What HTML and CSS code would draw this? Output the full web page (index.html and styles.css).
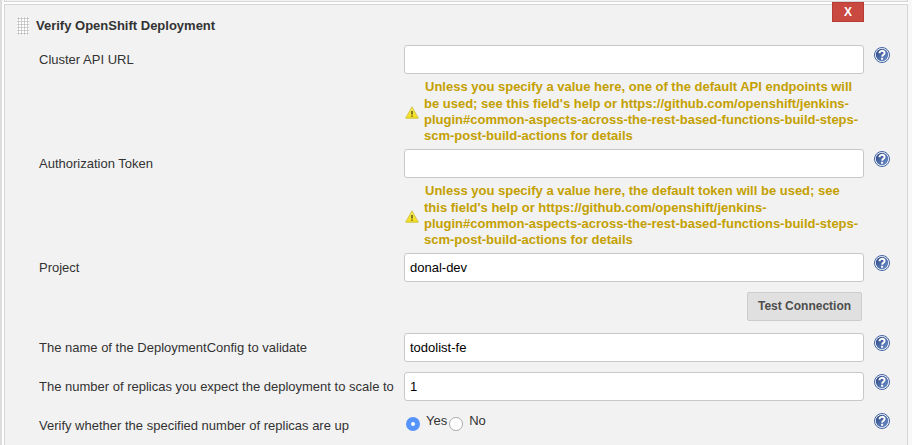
FILE: index.html
```html
<!DOCTYPE html>
<html lang="en">
<head>
<meta charset="utf-8">
<title>Verify OpenShift Deployment</title>
<link rel="stylesheet" href="styles.css">
</head>
<body>
<svg class="defs" width="0" height="0" aria-hidden="true">
  <defs>
    <linearGradient id="blue" x1="0" y1="0" x2="1" y2="1"><stop offset="0" stop-color="#27427f"/><stop offset="1" stop-color="#7395cf"/></linearGradient>
    <linearGradient id="yellow" x1="0" y1="0" x2="0" y2="1"><stop offset="0" stop-color="#f6e95c"/><stop offset="1" stop-color="#f4df12"/></linearGradient>
    <symbol id="help" viewBox="0 0 16 16">
      <circle cx="8" cy="8" r="7.5" fill="#fff" stroke="#4261a5" stroke-width="1"/>
      <circle cx="8" cy="8" r="6.2" fill="url(#blue)"/>
      <path d="M5.5 6.2C5.5 3.2 10.6 3.1 10.6 5.9C10.6 7.7 8.2 7.7 8.1 9.6M8.1 10.8V12.8" fill="none" stroke="#fff" stroke-width="2"/>
    </symbol>
    <symbol id="warn" viewBox="0 0 14 13">
      <path d="M7 .8L13.3 12.2H.7Z" fill="url(#yellow)" stroke="#d2c64a" stroke-width="1" stroke-linejoin="round"/>
      <path d="M7 5V8.6M7 9.4V10.8" stroke="#5b5728" stroke-width="1.5"/>
    </symbol>
  </defs>
</svg>
<div class="previous"></div>
<main class="panel">
  <button class="delete">X</button>
  <header class="title"><span class="grip"></span><b>Verify OpenShift Deployment</b></header>
  <div class="row"><label>Cluster API URL</label><input type="text"><svg class="help"><use href="#help"/></svg></div>
  <div class="warning"><svg><use href="#warn"/></svg><p><span class="w1">Unless you specify a value here, one of the default API endpoints will</span><span class="w2">be used; see this field's help or https://github.com/openshift/jenkins-</span><span class="w3">plugin#common-aspects-across-the-rest-based-functions-build-steps-</span><span class="w4">scm-post-build-actions for details</span></p></div>
  <div class="row"><label>Authorization Token</label><input type="text"><svg class="help"><use href="#help"/></svg></div>
  <div class="warning"><svg><use href="#warn"/></svg><p><span class="w1">Unless you specify a value here, the default token will be used; see</span><span class="w2">this field's help or https://github.com/openshift/jenkins-</span><span class="w3">plugin#common-aspects-across-the-rest-based-functions-build-steps-</span><span class="w4">scm-post-build-actions for details</span></p></div>
  <div class="row"><label>Project</label><input type="text" value="donal-dev"><svg class="help"><use href="#help"/></svg></div>
  <div class="actions"><button class="test">Test Connection</button></div>
  <div class="row"><label>The name of the DeploymentConfig to validate</label><input type="text" value="todolist-fe"><svg class="help"><use href="#help"/></svg></div>
  <div class="row spaced"><label>The number of replicas you expect the deployment to scale to</label><input type="text" value="1"><svg class="help"><use href="#help"/></svg></div>
  <div class="row spaced"><label>Verify whether the specified number of replicas are up</label><div class="radios"><i class="radio on"></i><span class="yes">Yes</span><i class="radio"></i><span>No</span></div><svg class="help"><use href="#help"/></svg></div>
</main>
</body>
</html>
```
FILE: styles.css
```css
* { box-sizing: border-box; }
html { height: 100%; background: #f8f8f8; }
body {
  height: 100%;
  margin: 0;
  padding-left: 2px;
  overflow: hidden;
  border-left: 2px solid #ddd;
  color: #333;
  font: 13px/16px "Liberation Sans", Arial, sans-serif;
}
.defs { position: absolute; }
.previous {
  width: 904px;
  height: 2px;
  border: 1px solid #d5d5d5;
  border-top: 0;
  background: #f2f2f2;
}
.panel {
  position: relative;
  width: 904px;
  height: 460px;
  margin-top: 2px;
  border: 1px solid #d5d5d5;
  background: #f2f2f2;
  box-shadow: 0 -2px #fff, -2px 0 #fff;
}
.delete {
  position: absolute;
  left: 827px;
  top: -3px;
  width: 32px;
  height: 20px;
  padding: 0;
  border: 1px solid #b73b36;
  background: #c9483f;
  color: #fff;
  font: bold 12px/17px "Liberation Sans", Arial, sans-serif;
}
.title { display: flex; height: 40px; padding: 12px 0 0 12px; }
.title b { margin: 1px 0 0 7px; line-height: 16px; }
.grip {
  width: 12px;
  height: 18px;
  background: radial-gradient(circle at 1.5px 1.5px, #bbb 0 0.9px, transparent 1.2px) 0 0 / 3px 3px #fff;
}
.row { display: flex; height: 29px; padding-left: 34px; }
.row label { width: 365px; padding-top: 7px; white-space: nowrap; }
.row input {
  width: 460px;
  height: 29px;
  padding: 0 5px 1px;
  border: 1px solid #c8c8c8;
  border-radius: 3px;
  background: #fff;
  color: #000;
  font: 13px "Liberation Sans", Arial, sans-serif;
}
.help { width: 16px; height: 16px; margin: 2px 0 0 10px; }
.spaced { margin-top: 10px; }
.warning { display: flex; height: 75px; padding: 5px 0 0 400px; }
.warning svg { width: 14px; height: 13px; margin: 27px 5px 0 0; }
.warning p {
  margin: 0;
  color: #c4a000;
  font-size: 13px;
  font-weight: bold;
  white-space: nowrap;
}
.warning span { display: block; width: max-content; height: 16px; line-height: 16px; }
.warning .w1 { height: 17px; margin-left: 1px; }
.actions { display: flex; justify-content: flex-end; height: 51px; padding: 10px 45px 0 0; }
.test {
  width: 115px;
  height: 29px;
  padding: 0 0 1px;
  border: 1px solid #ccc;
  border-radius: 2px;
  background: #e0e0e0;
  color: #4d4d4d;
  font: bold 12px "Liberation Sans", Arial, sans-serif;
}
.radios { display: flex; width: 460px; padding: 2px 0 0 2px; }
.radio { width: 14px; height: 14px; margin: 4px 6px 0 0; border: 1px solid #aaa; border-radius: 50%; background: #fff; }
.radio.on { border: 5px solid #5694fc; }
.yes { margin-right: 2px; }
```
